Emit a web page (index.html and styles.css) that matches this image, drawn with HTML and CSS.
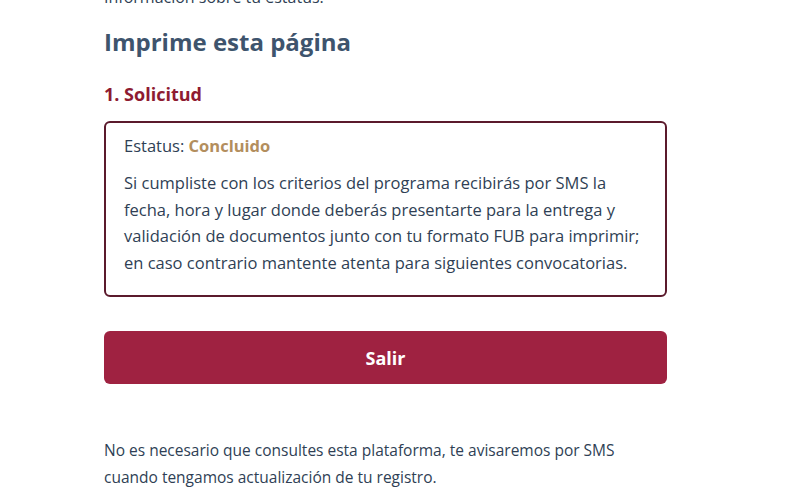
FILE: index.html
```html
<!DOCTYPE html>
<html lang="es">
<head>
<meta charset="utf-8">
<link rel="stylesheet" href="styles.css">
</head>
<body>
<main class="page">
  <p class="intro">Información sobre tu estatus.</p>
  <h1 class="title">Imprime esta página</h1>
  <h2 class="step">1. Solicitud</h2>
  <section class="card">
    <p class="status">Estatus: <strong class="done">Concluido</strong></p>
    <p class="body">Si cumpliste con los criterios del programa recibirás por SMS la fecha, hora y lugar donde deberás presentarte para la entrega y validación de documentos junto con tu formato FUB para imprimir; en caso contrario mantente atenta para siguientes convocatorias.</p>
  </section>
  <button class="exit" type="button">Salir</button>
  <p class="note">No es necesario que consultes esta plataforma, te avisaremos por SMS cuando tengamos actualización de tu registro.</p>
</main>
</body>
</html>
```

FILE: styles.css
```css
* { box-sizing: border-box; }
html, body { margin: 0; padding: 0; background: #fff; }
body {
  font-family: "Open Sans", "Lato", sans-serif;
  color: #2f3f55;
  overflow: hidden;
  height: 499px;
}
.page {
  width: 563px;
  margin: 0 0 0 104px;
  padding: 0;
}
.intro {
  margin: -13px 0 0;
  font-size: 16px;
  line-height: 20px;
}
.title {
  margin: 20px 0 0;
  font-size: 24px;
  line-height: 30px;
  font-weight: 700;
  color: #3e546d;
}
.step {
  margin: 25px 0 0;
  font-size: 18px;
  line-height: 24px;
  font-weight: 700;
  color: #8e1b31;
}
.card {
  margin-top: 15px;
  border: 2px solid #5b1a2c;
  border-radius: 6px;
  padding: 12px 14px 8px 18px;
  height: 176px;
}
.status {
  margin: 0;
  font-size: 16.5px;
  line-height: 22px;
}
.done { color: #b38e5d; font-weight: 700; }
.body {
  margin: 13px 0 0;
  font-size: 16.5px;
  line-height: 26.5px;
}
.exit {
  display: block;
  width: 100%;
  height: 53px;
  margin-top: 34px;
  border: 0;
  border-radius: 6px;
  background: #9f2241;
  color: #fff;
  font-family: inherit;
  font-size: 18px;
  font-weight: 700;
}
.note {
  margin: 53px 0 0;
  font-size: 15.5px;
  line-height: 26.5px;
}
```
